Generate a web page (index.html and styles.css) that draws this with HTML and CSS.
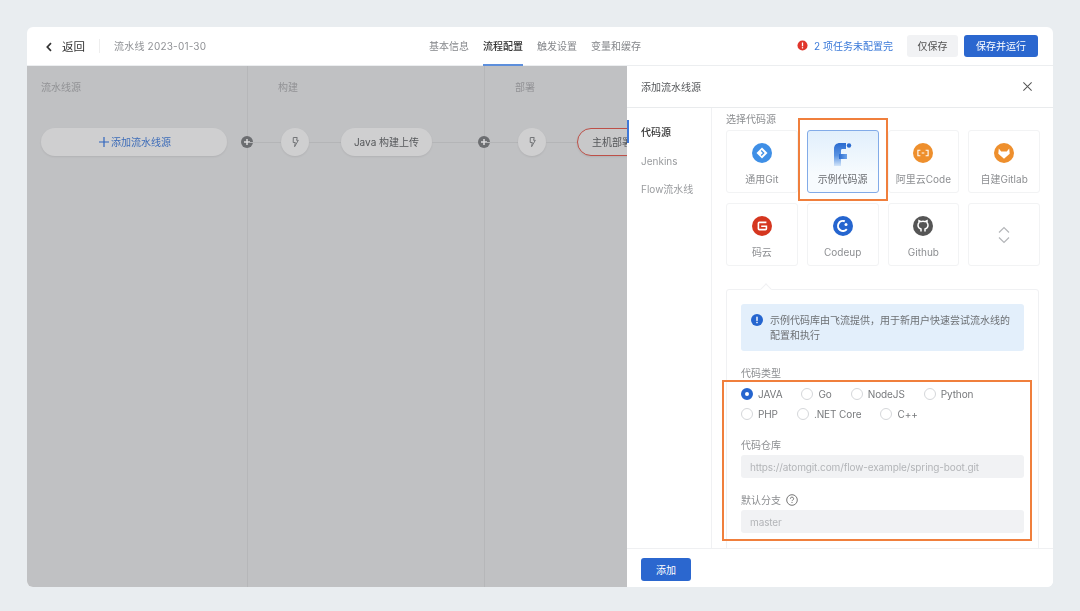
FILE: index.html
```html
<!DOCTYPE html>
<html lang="zh">
<head>
<meta charset="utf-8">
<title>流水线配置</title>
<link rel="stylesheet" href="styles.css">
</head>
<body>
<div class="app">
  <header class="topbar">
    <div class="top-left">
      <button class="back">
        <svg class="back-icon" viewBox="0 0 8 12"><path d="M6 2.200 2.300 6 6 9.800" fill="none" stroke="#333" stroke-width="1.700"/></svg>
        <span>返回</span>
      </button>
      <span class="top-divider"></span>
      <span class="pipe-name">流水线 2023-01-30</span>
    </div>
    <nav class="tabs">
      <a class="tab">基本信息</a>
      <a class="tab active">流程配置</a>
      <a class="tab">触发设置</a>
      <a class="tab">变量和缓存</a>
    </nav>
    <div class="top-right">
      <svg class="warn-icon" viewBox="0 0 12 12"><circle cx="6" cy="6" r="5.500" fill="#e0352b"/><rect x="5.300" y="2.700" width="1.400" height="4.200" fill="#fff"/><rect x="5.300" y="7.800" width="1.400" height="1.400" fill="#fff"/></svg>
      <span class="warn-text">2 项任务未配置完</span>
      <button class="btn btn-gray">仅保存</button>
      <button class="btn btn-blue">保存并运行</button>
    </div>
  </header>
  <div class="workspace">
    <section class="canvas">
      <div class="stage stage-source">
        <div class="stage-title">流水线源</div>
        <div class="flow">
          <div class="pill pill-add">
            <svg class="add-plus" viewBox="0 0 11 11"><path d="M5.500 0v11M0 5.500h11" stroke="#2f65bd" stroke-width="1.300"/></svg>
            添加流水线源
          </div>
        </div>
        <svg class="plus-node" viewBox="0 0 12 12"><circle cx="6" cy="6" r="6" fill="#6c6e71"/><path d="M6 3v6M3 6h6" stroke="#dcdcdd" stroke-width="1.500"/></svg>
      </div>
      <div class="stage stage-build">
        <div class="stage-title">构建</div>
        <div class="flow">
          <span class="line line-a"></span>
          <div class="bolt"><svg viewBox="0 0 12 12"><path d="M4.300 1.500h3.900l-.6 2.800h1.700L5.600 10.700l.7-4.200H4.200z" fill="none" stroke="#737578" stroke-width="1"/></svg></div>
          <span class="line line-b"></span>
          <div class="pill pill-java">Java 构建上传</div>
          <span class="line line-c"></span>
        </div>
        <svg class="plus-node" viewBox="0 0 12 12"><circle cx="6" cy="6" r="6" fill="#6c6e71"/><path d="M6 3v6M3 6h6" stroke="#dcdcdd" stroke-width="1.500"/></svg>
      </div>
      <div class="stage stage-deploy">
        <div class="stage-title">部署</div>
        <div class="flow">
          <span class="line line-a"></span>
          <div class="bolt"><svg viewBox="0 0 12 12"><path d="M4.300 1.500h3.900l-.6 2.800h1.700L5.600 10.700l.7-4.200H4.200z" fill="none" stroke="#737578" stroke-width="1"/></svg></div>
          <span class="line line-d"></span>
          <div class="pill pill-host">主机部署</div>
        </div>
      </div>
    </section>
    <aside class="drawer">
      <div class="drawer-head">
        <span>添加流水线源</span>
        <svg class="close-icon" viewBox="0 0 12 12"><path d="M1.500 1.500l9 9M10.500 1.500l-9 9" stroke="#555" stroke-width="1.100" fill="none"/></svg>
      </div>
      <div class="drawer-body">
        <nav class="side">
          <a class="side-item active">代码源</a>
          <a class="side-item">Jenkins</a>
          <a class="side-item">Flow流水线</a>
        </nav>
        <div class="form">
          <div class="label">选择代码源</div>
          <div class="sources">
            <div class="source">
              <svg class="source-icon" viewBox="0 0 20 20"><circle cx="10" cy="10" r="10" fill="#3f8fe6"/><path d="M10 4.500 15.500 10 10 15.500 4.500 10z" fill="#fff"/><path d="M9.200 7.500 11.700 10 9.200 12.500" stroke="#3f8fe6" stroke-width="1.300" fill="none"/></svg>
              <span>通用Git</span>
            </div>
            <div class="source selected">
              <svg class="source-icon f-logo" viewBox="0 0 20 25">
                <defs>
                  <linearGradient id="fstem" x1="0" y1="0" x2="0" y2="1"><stop offset="0" stop-color="#2a6bd0"/><stop offset=".55" stop-color="#5a93e2"/><stop offset="1" stop-color="#d3e5f9"/></linearGradient>
                  <linearGradient id="fbar" x1="0" y1="0" x2="1" y2="0"><stop offset="0" stop-color="#2a6bd0"/><stop offset="1" stop-color="#6ea4ea"/></linearGradient>
                </defs>
                <path d="M1 25V8C1 4 3.500 2 7 2h6v6H9.500C8.500 8 8 8.500 8 9.500V25z" fill="url(#fstem)"/>
                <path d="M6 13h8v5H6z" fill="url(#fbar)"/>
                <circle cx="16" cy="4.500" r="2.200" fill="#2a6bd0"/>
              </svg>
              <span>示例代码源</span>
            </div>
            <div class="source">
              <svg class="source-icon" viewBox="0 0 20 20"><circle cx="10" cy="10" r="10" fill="#ee8f2d"/><path d="M7.400 7.300H4.900v5.400h2.500M12.600 7.300h2.500v5.400h-2.500" fill="none" stroke="#fff" stroke-width="1.100"/><path d="M8.700 10h2.600" stroke="#fff" stroke-width="1"/></svg>
              <span>阿里云Code</span>
            </div>
            <div class="source">
              <svg class="source-icon" viewBox="0 0 20 20"><circle cx="10" cy="10" r="10" fill="#ee8f2d"/><path d="M4.800 5.500 7.200 8.600h5.600l2.400-3.100.5 5.300-5.700 4.900-5.700-4.900z" fill="#fff"/></svg>
              <span>自建Gitlab</span>
            </div>
            <div class="source">
              <svg class="source-icon" viewBox="0 0 20 20"><circle cx="10" cy="10" r="10" fill="#d5361f"/><path d="M14.400 6.400H7.300a.9.900 0 0 0-.9.900v5.400a.9.900 0 0 0 .9.900h6.200a.9.900 0 0 0 .9-.9v-2.500H9.200" fill="none" stroke="#fff" stroke-width="1.600"/></svg>
              <span>码云</span>
            </div>
            <div class="source">
              <svg class="source-icon" viewBox="0 0 20 20"><circle cx="10" cy="10" r="10" fill="#2565cf"/><path d="M13.800 13.200A5 5 0 1 1 11.800 5.300" fill="none" stroke="#fff" stroke-width="2"/><circle cx="13" cy="8.400" r="1.500" fill="#fff"/></svg>
              <span>Codeup</span>
            </div>
            <div class="source">
              <svg class="source-icon" viewBox="0 0 20 20"><circle cx="10" cy="10" r="10" fill="#555"/><path d="M8 15.500V13C5.500 12.200 5 10.600 5 9.200c0-1 .4-1.800 1-2.400V4.700l2 .9a6 6 0 0 1 4 0l2-.9v2.100c.6.6 1 1.400 1 2.400 0 1.400-.5 3-3 3.800v2.500" fill="none" stroke="#fff" stroke-width="1.500"/></svg>
              <span>Github</span>
            </div>
            <div class="source source-more">
              <svg class="more-icon" viewBox="0 0 12 18"><path d="M1 6.500 6 1.500l5 5M1 11.500l5 5 5-5" fill="none" stroke="#b4b6b9" stroke-width="1.200"/></svg>
            </div>
          </div>
          <div class="panel">
            <span class="panel-caret"></span>
            <div class="info">
              <svg class="info-icon" viewBox="0 0 12 12"><circle cx="6" cy="6" r="6" fill="#2565cf"/><rect x="5.300" y="2.700" width="1.400" height="4.200" fill="#fff"/><rect x="5.300" y="7.800" width="1.400" height="1.400" fill="#fff"/></svg>
              <p>示例代码库由飞流提供，用于新用户快速尝试流水线的配置和执行</p>
            </div>
            <div class="label label-type">代码类型</div>
            <div class="radios">
              <label class="radio"><span class="dot on"></span>JAVA</label>
              <label class="radio"><span class="dot"></span>Go</label>
              <label class="radio"><span class="dot"></span>NodeJS</label>
              <label class="radio"><span class="dot"></span>Python</label>
              <label class="radio"><span class="dot"></span>PHP</label>
              <label class="radio"><span class="dot"></span>.NET Core</label>
              <label class="radio"><span class="dot"></span>C++</label>
            </div>
            <div class="label label-repo">代码仓库</div>
            <div class="input">https://atomgit.com/flow-example/spring-boot.git</div>
            <div class="label label-branch">默认分支
              <svg class="help-icon" viewBox="0 0 12 12"><circle cx="6" cy="6" r="5.300" fill="none" stroke="#777" stroke-width="1"/><path d="M4.400 4.700A1.600 1.600 0 1 1 6.600 6.200c-.4.200-.6.400-.6.900" fill="none" stroke="#777" stroke-width="1"/><rect x="5.500" y="8" width="1" height="1" fill="#777"/></svg>
            </div>
            <div class="input">master</div>
          </div>
        </div>
      </div>
      <div class="drawer-foot">
        <button class="btn btn-blue btn-add">添加</button>
      </div>
    </aside>
  </div>
  <div class="mark mark-card"></div>
  <div class="mark mark-form"></div>
</div>
</body>
</html>
```

FILE: styles.css
```css
* { box-sizing: border-box; }
html, body { height: 100%; }
body {
  margin: 0;
  padding: 27px;
  background: #e9edf0;
  font-family: Inter, "Noto Sans CJK SC", "Noto Sans", sans-serif;
  font-size: 10px;
  line-height: 14px;
  color: #666;
  overflow: hidden;
}
button { font: inherit; border: 0; padding: 0; }
.app {
  position: relative;
  width: 1026px;
  height: 560px;
  background: #fff;
  border-radius: 6px;
  overflow: hidden;
  display: flex;
  flex-direction: column;
  filter: blur(.4px);
}
.topbar {
  height: 39px;
  flex: none;
  display: flex;
  align-items: center;
  padding: 0 15px 0 0;
  border-bottom: 1px solid #eceef0;
}
.top-left { width: 402px; display: flex; align-items: center; padding-left: 18px; }
.back { display: flex; align-items: center; background: none; color: #333; font-size: 11.500px; margin-top: 1px; }
.back-icon { width: 8px; height: 12px; margin-right: 9px; }
.top-divider { width: 1px; height: 14px; background: #eee; margin: 0 14px; }
.pipe-name { color: #8f9195; letter-spacing: .2px; }
.tabs { display: flex; gap: 14px; height: 39px; }
.tab { position: relative; line-height: 38px; color: #85878b; }
.tab.active { color: #333; font-weight: 500; }
.tab.active::after {
  content: "";
  position: absolute;
  left: 0; right: 0; bottom: 0;
  height: 2px;
  background: #5d8fdc;
}
.top-right { margin-left: auto; display: flex; align-items: center; }
.warn-icon { width: 11px; height: 11px; margin-right: 6px; margin-left: 1px; margin-top: -1px; }
.warn-text { color: #3b7ad9; margin-right: 14px; }
.btn { height: 22px; border-radius: 3px; text-align: center; }
.btn-gray { width: 51px; background: #f1f2f4; color: #555; }
.btn-blue { width: 74px; margin-left: 6px; background: #2b67cf; color: #fff; }

.workspace { flex: 1; min-height: 0; display: flex; }
.canvas { width: 600px; flex: none; background: #c0c1c3; display: flex; overflow: hidden; }
.stage { position: relative; border-right: 1px solid #b6b7b9; }
.stage-source { width: 221px; padding-left: 14px; }
.stage-build { width: 237px; padding-left: 30px; }
.stage-deploy { flex: 1; min-width: 0; padding-left: 30px; border-right: 0; overflow: hidden; }
.stage-title { margin-top: 14px; color: #919295; }
.flow { display: flex; align-items: center; margin-top: 34px; height: 28px; }
.stage-build .flow, .stage-deploy .flow { margin-left: -30px; }
.line { height: 1px; background: #b4b5b7; flex: none; }
.line-a { width: 33px; }
.line-b { width: 32px; }
.line-c { flex: 1; }
.line-d { width: 31px; }
.pill {
  height: 28px;
  border-radius: 14px;
  background: #cfcfd0;
  box-shadow: 0 1px 2px rgba(0, 0, 0, .08);
  display: flex;
  align-items: center;
  justify-content: center;
  flex: none;
  color: #55575a;
}
.pill-add { width: 186px; color: #3d6cb8; gap: 2px; padding-left: 2px; }
.add-plus { width: 10px; height: 10px; }
.pill-java { width: 91px; }
.pill-host {
  width: 92px;
  justify-content: flex-start;
  padding-left: 14px;
  background: #c8c8c9;
  border: 1px solid #bd5048;
}
.bolt {
  width: 28px;
  height: 28px;
  flex: none;
  border-radius: 50%;
  background: #cfcfd0;
  box-shadow: 0 1px 2px rgba(0, 0, 0, .08);
  display: flex;
  align-items: center;
  justify-content: center;
}
.bolt svg { width: 12px; height: 12px; }
.plus-node {
  position: absolute;
  right: -6px;
  top: 69.500px;
  width: 12px;
  height: 12px;
}

.drawer { flex: 1; min-width: 0; display: flex; flex-direction: column; background: #fff; }
.drawer-head {
  height: 42px;
  flex: none;
  display: flex;
  align-items: center;
  justify-content: space-between;
  padding: 0 20px 0 14px;
  border-bottom: 1px solid #e9ebed;
  color: #55575a;
}
.close-icon { width: 11px; height: 11px; }
.drawer-body { flex: 1; min-height: 0; display: flex; }
.side {
  width: 85px;
  flex: none;
  padding-top: 10px;
  border-right: 1px solid #f0f1f3;
  display: flex;
  flex-direction: column;
}
.side-item { position: relative; padding-left: 14px; height: 28.500px; line-height: 28px; color: #9a9c9f; }
.side-item.active { color: #333; font-weight: 500; }
.side-item.active::before {
  content: "";
  position: absolute;
  left: 0; top: 2px;
  width: 2px;
  height: 23px;
  background: #3f78d8;
}
.form { flex: 1; min-width: 0; overflow: hidden; padding: 4px 0 0 14px; }
.label { color: #8b8d90; }
.sources {
  width: 314px;
  margin-top: 4px;
  display: grid;
  grid-template-columns: repeat(4, 1fr);
  grid-auto-rows: 63px;
  column-gap: 9px;
  row-gap: 10px;
}
.source {
  display: flex;
  flex-direction: column;
  align-items: center;
  padding-top: 12px;
  gap: 9px;
  border: 1px solid #f2f3f4;
  border-radius: 3px;
  color: #8c8e91;
  white-space: nowrap;
}
.source.selected {
  border-color: #82abe8;
  background: linear-gradient(#e1effc, #f7fbfe 70%);
  color: #6a6c70;
}
.source-icon { width: 20px; height: 20px; flex: none; }
.source-icon.f-logo { height: 25px; margin: -2px 0 -3px; }
.source-more { justify-content: center; padding-top: 0; }
.more-icon { width: 12px; height: 18px; }
.panel {
  position: relative;
  width: 313px;
  height: 300px;
  margin-top: 23px;
  padding: 14px 14px 0;
  border: 1px solid #f0f1f3;
  border-radius: 3px;
}
.panel-caret {
  position: absolute;
  left: 35px;
  top: -5px;
  width: 8px;
  height: 8px;
  background: #fff;
  border-top: 1px solid #f0f1f3;
  border-left: 1px solid #f0f1f3;
  transform: rotate(45deg);
}
.info {
  height: 47px;
  display: flex;
  align-items: flex-start;
  gap: 7px;
  padding: 9px 10px 0;
  background: #e3effb;
  border-radius: 3px;
}
.info-icon { width: 12px; height: 12px; flex: none; margin-top: 1px; }
.info p { margin: 0; line-height: 15px; color: #6d7074; }
.label-type { margin-top: 15px; }
.radios { display: flex; flex-wrap: wrap; gap: 6px 19px; margin-top: 7px; }
.radio { display: flex; align-items: center; gap: 5px; color: #77797c; letter-spacing: -.1px; }
.dot { width: 12px; height: 12px; border-radius: 50%; border: 1px solid #d5d7da; background: #fff; }
.dot.on { border: 4px solid #2565cf; }
.label-repo { margin-top: 17px; }
.input {
  height: 23px;
  margin-top: 3px;
  padding-left: 9px;
  line-height: 24px;
  background: #f1f2f4;
  border-radius: 3px;
  color: #b3b5b8;
  letter-spacing: -.12px;
}
.label-branch { margin-top: 15px; display: flex; align-items: center; gap: 5px; }
.help-icon { width: 12px; height: 12px; }
.drawer-foot { height: 39px; flex: none; padding: 9px 14px 0; border-top: 1px solid #eff0f2; }
.btn-add { width: 50px; height: 23px; margin-left: 0; }

.mark { position: absolute; border: 2px solid #f07f3c; pointer-events: none; }
.mark-card { left: 771px; top: 91px; width: 90px; height: 83px; }
.mark-form { left: 695px; top: 353px; width: 310px; height: 161px; }
```
